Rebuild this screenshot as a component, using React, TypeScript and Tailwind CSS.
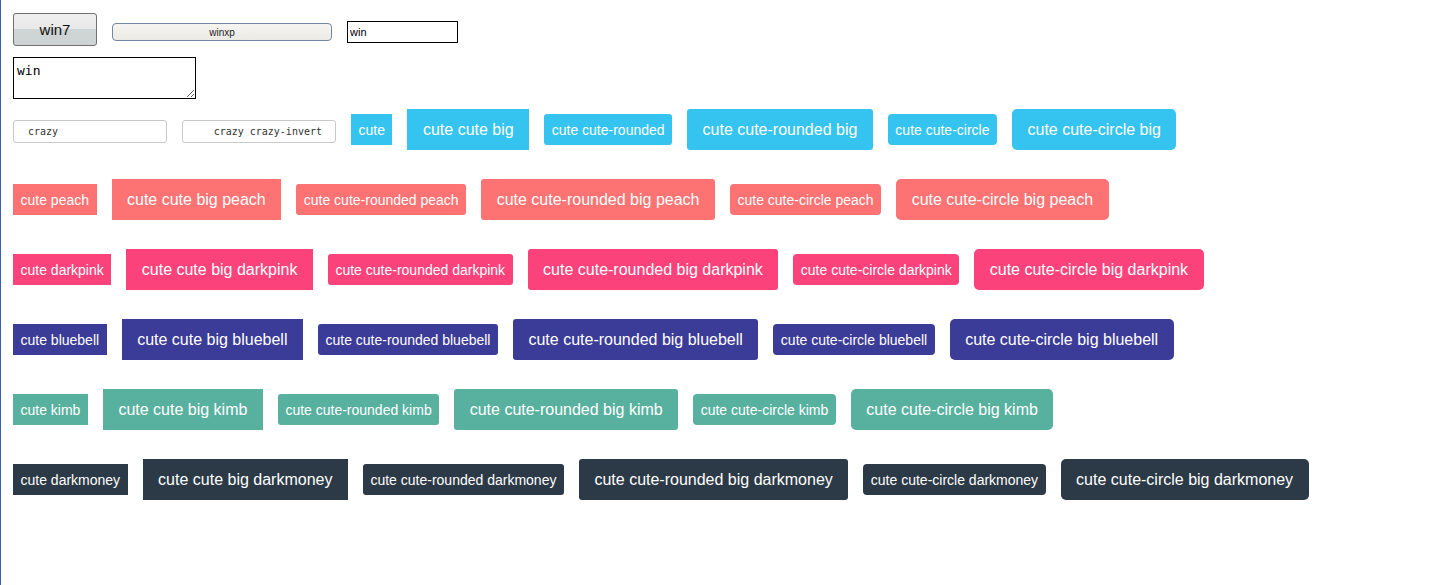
import React from "react";

const colors = [
  { name: "peach", bg: "bg-[#fd7272]" },
  { name: "darkpink", bg: "bg-[#fc427b]" },
  { name: "bluebell", bg: "bg-[#3b3b98]" },
  { name: "kimb", bg: "bg-[#58b19f]" },
  { name: "darkmoney", bg: "bg-[#2c3a47]" },
];

function CuteRow({ suffix, bg }: { suffix: string; bg: string }) {
  const small = `h-[31px] px-[7.5px] pt-px text-[14px] text-white ${bg}`;
  const big = `h-[41px] px-[15.5px] text-[16px] text-white ${bg}`;
  const s = suffix ? " " + suffix : "";
  return (
    <>
      <button className={small}>{"cute" + s}</button>
      <button className={big}>{"cute cute big" + s}</button>
      <button className={`${small} rounded-[3px]`}>{"cute cute-rounded" + s}</button>
      <button className={`${big} rounded-[3px]`}>{"cute cute-rounded big" + s}</button>
      <button className={`${small} rounded-[4px]`}>{"cute cute-circle" + s}</button>
      <button className={`${big} rounded-[5px]`}>{"cute cute-circle big" + s}</button>
    </>
  );
}

export default function App() {
  return (
    <div
      className="h-[585px] border-l border-[#3d5cb8] bg-white pl-3 pt-[13px]"
      style={{ fontFamily: '"Liberation Sans", Arial, sans-serif' }}
    >
      {/* row 1 */}
      <div className="flex items-start gap-[15px]">
        <button className="h-[33px] w-[84px] rounded-[3px] border border-[#707070] bg-[linear-gradient(#eeeeee_0%,#e8e8e8_50%,#cfd4d4_50%,#cdd2d2_100%)] pt-[2px] text-[15px] text-[#111]">
          win7
        </button>
        <button className="mt-[10px] h-[18px] w-[220px] rounded-[4px] border border-[#7189a8] bg-[linear-gradient(#f6f5f1,#ebeae4)] text-[10px] text-[#222]">
          winxp
        </button>
        <input
          readOnly
          value="win"
          className="mt-[8px] h-[22px] w-[111px] border border-black px-[2px] text-[11px] text-black outline-none"
        />
      </div>

      <textarea
        defaultValue="win"
        spellCheck={false}
        className="mt-[11px] block h-[42px] w-[183px] border border-black px-[3px] pt-[4px] text-[13px] leading-[17px] text-black outline-none"
        style={{ fontFamily: '"DejaVu Sans Mono", monospace' }}
      />

      {/* cute rows */}
      <div className="mt-[10px] flex flex-col gap-[29px]">
        <div className="flex items-center gap-[15px]">
          <input
            readOnly
            value="crazy"
            className="mt-[3px] h-[23px] w-[154px] rounded-[3px] border border-[#c8c8c8] px-[14px] pt-px text-[10px] text-[#333] outline-none"
            style={{ fontFamily: '"DejaVu Sans Mono", monospace' }}
          />
          <input
            readOnly
            value="crazy crazy-invert"
            className="mt-[3px] h-[23px] w-[154px] rounded-[3px] border border-[#c8c8c8] px-[13px] pt-px text-right text-[10px] text-[#333] outline-none"
            style={{ fontFamily: '"DejaVu Sans Mono", monospace' }}
          />
          <CuteRow suffix="" bg="bg-[#35c4f0]" />
        </div>
        {colors.map((c) => (
          <div key={c.name} className="flex items-center gap-[15px]">
            <CuteRow suffix={c.name} bg={c.bg} />
          </div>
        ))}
      </div>
    </div>
  );
}
